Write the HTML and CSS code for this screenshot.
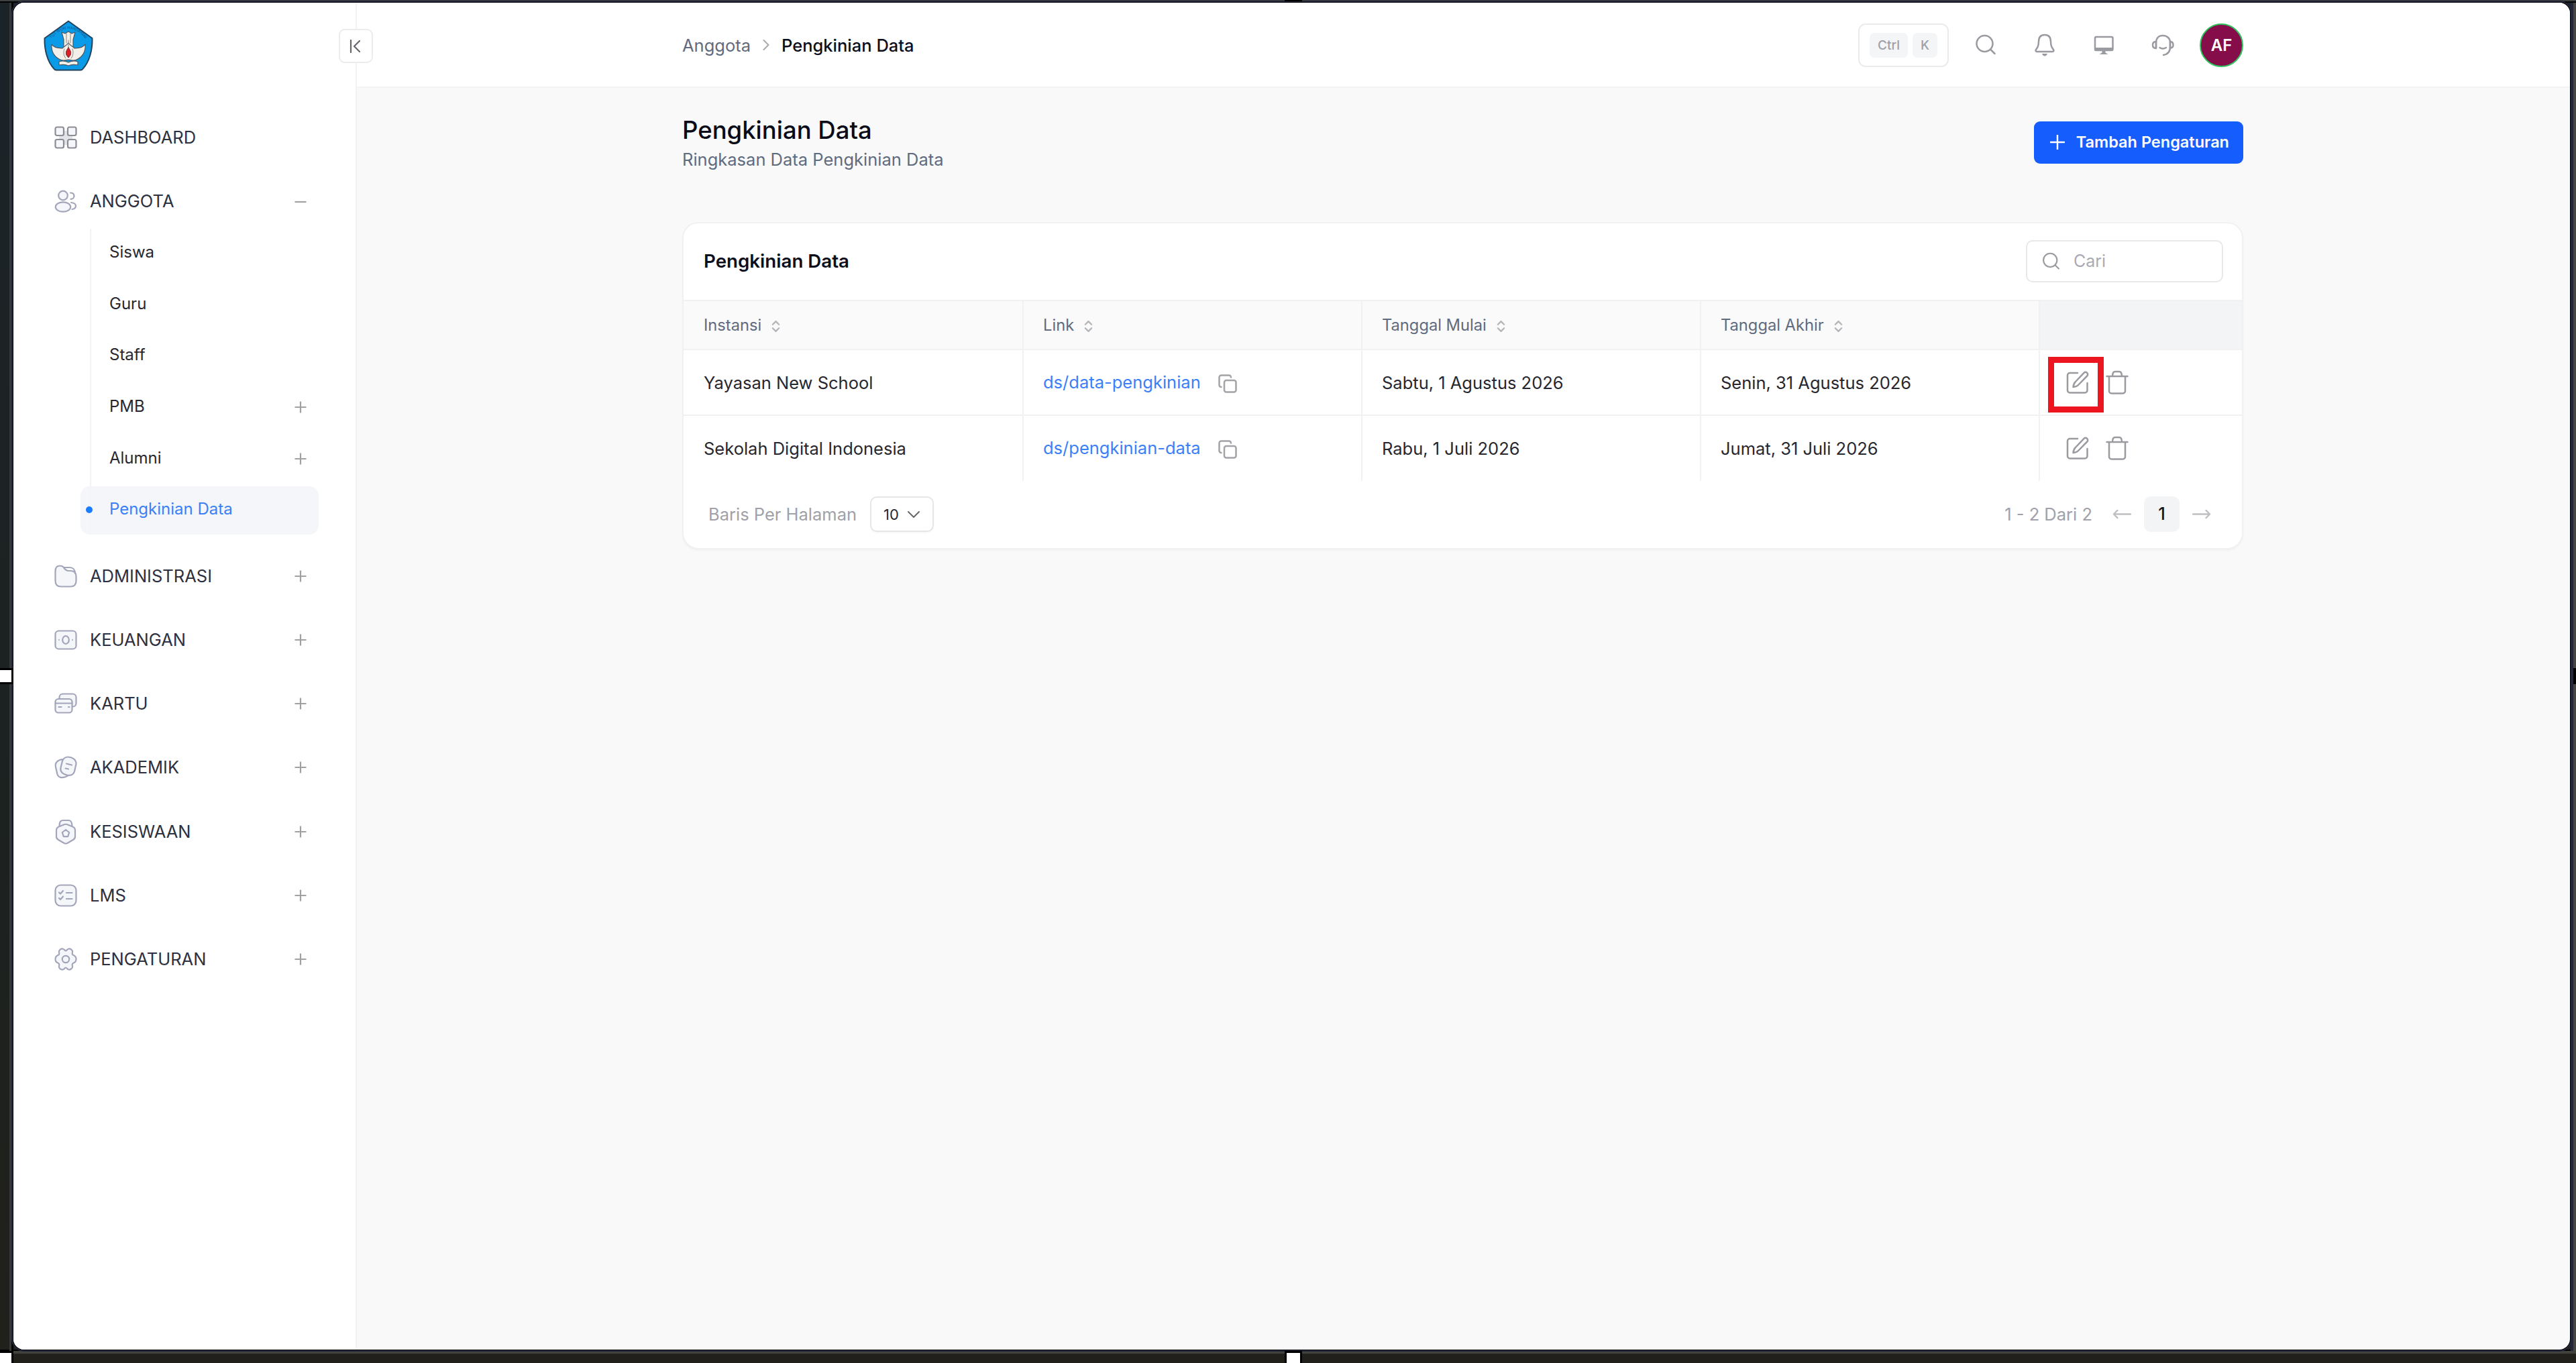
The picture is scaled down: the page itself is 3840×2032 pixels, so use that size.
FILE: index.html
```html
<!DOCTYPE html>
<html lang="id">
<head>
    <meta charset="UTF-8">
    <title>Pengkinian Data</title>
    <link rel="stylesheet" href="styles.css">
</head>
<body>
    <!-- shared icons -->
    <svg class="sprite" width="0" height="0">
        <symbol id="plus" viewBox="0 0 18 18"><path d="M9 .5v17M.5 9h17"/></symbol>
        <symbol id="search" viewBox="0 0 32 32"><circle cx="14.5" cy="14" r="12"/><path d="M23.5 23l6 6"/></symbol>
        <symbol id="sort" viewBox="0 0 14 20"><path d="M2 7l5-5 5 5M2 13l5 5 5-5"/></symbol>
        <symbol id="copy" viewBox="0 0 28 28"><rect x="9" y="9" width="17.5" height="17.5" rx="3"/><path d="M4.500 19A3 3 0 0 1 1.500 16V4.500A3 3 0 0 1 4.500 1.500H16A3 3 0 0 1 19 4.500"/></symbol>
        <symbol id="edit" viewBox="0 0 34 34"><path d="M17 3H5.500A3.500 3.500 0 0 0 2 6.500V29a3.500 3.500 0 0 0 3.500 3.500H28A3.500 3.500 0 0 0 31.500 29V18"/><path d="M26.500 2.800a3.300 3.300 0 0 1 4.700 4.700L18 21c-2 2-5 2.700-7.500 3 .3-2.500 1-5.500 3-7.500z"/></symbol>
        <symbol id="trash" viewBox="0 0 34 36"><path d="M1.500 9h31M5 9v22a3.500 3.500 0 0 0 3.500 3.500h17A3.500 3.500 0 0 0 29 31V9M10 9c0-5 1.500-7 4-7h6c2.500 0 4 2 4 7"/></symbol>
    </svg>

    <div class="window">
        <aside class="sidebar">
            <div class="sidebar-head">
                <svg class="logo" viewBox="0 0 74 76">
                    <path class="shield" d="M37 1.500L72.500 27C73 45 68 62 59 72c-1 1.700-2 2.500-4 2.500H19c-2 0-3-.8-4-2.500C6 62 1 45 1.500 27z"/>
                    <path id="arc" class="arc" d="M9 31Q37-5 65 31"/>
                    <text class="motto"><textPath href="#arc" startOffset="50%">TUT WURI HANDAYANI</textPath></text>
                    <path class="wing" d="M27 18l5 2 5-3 5 3 5-2-3 11v14H30V29z"/>
                    <path class="wing" d="M12 36c4 6 10 5 16 6 3-3 6-4 9-8 3 4 6 5 9 8 6-1 12 0 16-6 1 12-4 18-11 22-5 3-9 2-14 1-5 1-9 2-14-1-7-4-12-10-11-22z"/>
                    <path class="feather" d="M34 20v14M40 20v14M31 43c-2 5-1 10 2 14M43 43c2 5 1 10-2 14M37 30v12"/>
                    <path class="flame" d="M37 41c4 5 4 8 3 11l-3 4-3-4c-1-3-1-6 3-11z"/>
                    <path class="book" d="M23 62c5-2 10-1 14 1 4-2 9-3 14-1v5c-5-1-10-1-14 1-4-2-9-2-14-1z"/>
                </svg>
                <button class="collapse">
                    <svg width="18" height="20" viewBox="0 0 18 20"><path d="M2 1v18M15 2L7 10l8 8"/></svg>
                </button>
            </div>

            <nav class="nav">
                <a class="nav-item">
                    <svg class="nav-icon dark" viewBox="0 0 34 34"><path class="cross" d="M13 7h8v7h6v6h-6v8h-8v-8H7v-6h6z"/><rect x="1.500" y="1.500" width="12.500" height="12.500" rx="2.500"/><rect x="20" y="1.500" width="12.500" height="12.500" rx="2.500"/><rect x="1.500" y="20" width="12.500" height="12.500" rx="2.500"/><rect x="20" y="20" width="12.500" height="12.500" rx="2.500"/></svg>
                    <span>DASHBOARD</span>
                </a>
                <a class="nav-item">
                    <svg class="nav-icon" viewBox="0 0 34 34"><circle cx="13" cy="8.500" r="6.800"/><ellipse cx="13" cy="25.500" rx="11.200" ry="7.200"/><path class="open" d="M24 4.500c3.500 0 5.500 2 5.500 4.700 0 2.500-2 4.600-5 4.600M25 19c4 .5 7 2 7 5s-2.500 4.500-5.500 5"/></svg>
                    <span>ANGGOTA</span>
                    <svg class="toggle" viewBox="0 0 18 18"><path d="M.5 10h17"/></svg>
                </a>
                <div class="subnav">
                    <a class="subnav-item"><span>Siswa</span></a>
                    <a class="subnav-item"><span>Guru</span></a>
                    <a class="subnav-item"><span>Staff</span></a>
                    <a class="subnav-item"><span>PMB</span><svg class="toggle"><use href="#plus"/></svg></a>
                    <a class="subnav-item"><span>Alumni</span><svg class="toggle"><use href="#plus"/></svg></a>
                    <a class="subnav-item active"><i class="dot"></i><span>Pengkinian Data</span></a>
                </div>
                <a class="nav-item">
                    <svg class="nav-icon" viewBox="0 0 34 34"><path d="M1.500 9.500C1.500 4 4 1.500 8 1.500c4 0 5 1 7 4 1.500 2 2.500 3.500 6 3.500h3c6 0 8.500 2.500 8.500 8V24c0 6-3 8.500-8.500 8.500H10c-6 0-8.500-3-8.500-8.500z"/><path class="open" d="M14.500 4H23c5.500 0 7.500 2.500 8 9"/></svg>
                    <span>ADMINISTRASI</span><svg class="toggle"><use href="#plus"/></svg>
                </a>
                <a class="nav-item">
                    <svg class="nav-icon" viewBox="0 0 34 34"><rect x="1.500" y="3.500" width="31" height="27" rx="5"/><ellipse cx="17" cy="17" rx="4.800" ry="5.800"/><path class="thin" d="M7 16.500v1M27 16.500v1"/></svg>
                    <span>KEUANGAN</span><svg class="toggle"><use href="#plus"/></svg>
                </a>
                <a class="nav-item">
                    <svg class="nav-icon" viewBox="0 0 34 34"><path d="M7.500 10V7.500a5 5 0 0 1 5-5h15a5 5 0 0 1 5 5v9a5 5 0 0 1-5 5H26"/><rect x="1.500" y="10" width="25" height="20.500" rx="4.500"/><path d="M1.500 16.500h25M6.500 22h4M21 22h1.500"/></svg>
                    <span>KARTU</span><svg class="toggle"><use href="#plus"/></svg>
                </a>
                <a class="nav-item">
                    <svg class="nav-icon" viewBox="0 0 34 34"><path d="M12 5C5 6 .5 10 2 16.500l2.500 11C6 32 11 33.500 17 31c3-1.500 5-2 5.500-3z"/><path d="M20.500 1.500c6 0 12.500 4 12 10.500l-2.500 11c-1.500 5-6 6.500-11 5.500-6.500-1.500-10.500-5-9.500-11l2.500-10c1.500-4 4-6 8.500-6z"/><path d="M18 11.500l8 2M16.500 18.500l4.500 1"/></svg>
                    <span>AKADEMIK</span><svg class="toggle"><use href="#plus"/></svg>
                </a>
                <a class="nav-item">
                    <svg class="nav-icon" viewBox="0 0 34 34"><path d="M7.500 9.500C7.500 2.500 9 0 12.500 0h9c3.500 0 5 2.500 5 9.500"/><path d="M14 6.500c2-1 4-1 6 0l7.500 3c2.500 1.200 3.500 3 3.500 5.500v9c0 2.500-1 4-3 5l-8.500 5c-2 1-3 1-5 0L6 29c-2-1-3-2.500-3-5v-9c0-2.500 1-4.300 3.500-5.500z"/><path d="M17 14l5.200 4-2 6.200h-6.400l-2-6.200z"/></svg>
                    <span>KESISWAAN</span><svg class="toggle"><use href="#plus"/></svg>
                </a>
                <a class="nav-item">
                    <svg class="nav-icon" viewBox="0 0 34 34"><rect x="1.500" y="1.500" width="31" height="31" rx="8"/><path class="open" d="M7 12.500l2 2 4-4.500M7 21l2 2 4-4.500M18 13h8.500M18 22h8.500"/></svg>
                    <span>LMS</span><svg class="toggle"><use href="#plus"/></svg>
                </a>
                <a class="nav-item">
                    <svg class="nav-icon" viewBox="0 0 34 34"><path d="M17 4.500C18.500 4.500 19 2 21.500 1.500s5 1.500 5.500 3.500-1 3.500 0 5 5.500 1 5.500 7-4.500 5-5.500 7 .5 3.500 0 5-3 4-5.500 3.500-3-3-4.500-3-2 2.500-4.500 3S7.500 31 7 29s1-3 0-5-5.500-1-5.500-7S6 11.500 7 10s-.5-3 0-5 3-4 5.500-3.500 3 3 4.500 3z"/><circle cx="17" cy="17" r="5.200"/></svg>
                    <span>PENGATURAN</span><svg class="toggle"><use href="#plus"/></svg>
                </a>
            </nav>
        </aside>

        <main class="main">
            <header class="topbar">
                <div class="container topbar-inner">
                    <div class="breadcrumb">
                        <span>Anggota</span>
                        <svg width="10" height="18" viewBox="0 0 10 18"><path d="M1.500 2l7 7-7 7"/></svg>
                        <strong>Pengkinian Data</strong>
                    </div>
                    <div class="shortcut"><kbd>Ctrl</kbd><kbd>K</kbd></div>
                    <div class="tool"><svg width="32" height="32"><use href="#search"/></svg></div>
                    <div class="tool"><svg width="32" height="34" viewBox="0 0 32 34"><path d="M16 2c6 0 9 4 9 10 0 8 2 9 4 12 1 2 0 3-2 3H5c-2 0-3-1-2-3 2-3 4-4 4-12 0-6 3-10 9-10z"/><path class="solid" d="M12 30h8c-1 2.500-2 3.500-4 3.500s-3-1-4-3.500z"/></svg></div>
                    <div class="tool"><svg width="32" height="34" viewBox="0 0 32 34"><rect x="3" y="5" width="26.500" height="20" rx="2"/><path class="solid" d="M2 21h28v3.500q0 1.500-2 1.500H18.500v2.500l4 2.500H9.500l4-2.500V26H4q-2 0-2-1.500z"/></svg></div>
                    <div class="tool"><svg width="34" height="34" viewBox="0 0 34 34"><path d="M7 21V14C7 7 11 3 17 3s11 4 11 10v7c0 7-4 11-10 12"/><path d="M7 12c-4 0-5 2-5 5s1 5 5 5zM28 12c3 0 4.500 2 4.500 5s-1 4.500-4.500 4.500zM12.500 21c3 2 6 2 9.500 0"/></svg></div>
                    <div class="avatar">AF</div>
                </div>
            </header>

            <div class="container content">
                <div class="page-head">
                    <div>
                        <h1>Pengkinian Data</h1>
                        <p>Ringkasan Data Pengkinian Data</p>
                    </div>
                    <button class="btn-primary"><svg width="22" height="22"><use href="#plus"/></svg><span>Tambah Pengaturan</span></button>
                </div>

                <section class="card">
                    <div class="card-head">
                        <h2>Pengkinian Data</h2>
                        <div class="search-box"><svg width="27" height="27"><use href="#search"/></svg><span>Cari</span></div>
                    </div>

                    <table class="table">
                        <thead>
                            <tr>
                                <th><span>Instansi</span><svg class="sort"><use href="#sort"/></svg></th>
                                <th><span>Link</span><svg class="sort"><use href="#sort"/></svg></th>
                                <th><span>Tanggal Mulai</span><svg class="sort"><use href="#sort"/></svg></th>
                                <th><span>Tanggal Akhir</span><svg class="sort"><use href="#sort"/></svg></th>
                                <th class="col-action"></th>
                            </tr>
                        </thead>
                        <tbody>
                            <tr>
                                <td>Yayasan New School</td>
                                <td><a class="link">ds/data-pengkinian</a><svg class="copy"><use href="#copy"/></svg></td>
                                <td>Sabtu, 1 Agustus 2026</td>
                                <td>Senin, 31 Agustus 2026</td>
                                <td class="col-action">
                                    <div class="actions">
                                        <span class="marked"><svg class="act"><use href="#edit"/></svg></span>
                                        <svg class="act trash"><use href="#trash"/></svg>
                                    </div>
                                </td>
                            </tr>
                            <tr>
                                <td>Sekolah Digital Indonesia</td>
                                <td><a class="link">ds/pengkinian-data</a><svg class="copy"><use href="#copy"/></svg></td>
                                <td>Rabu, 1 Juli 2026</td>
                                <td>Jumat, 31 Juli 2026</td>
                                <td class="col-action">
                                    <div class="actions">
                                        <span><svg class="act"><use href="#edit"/></svg></span>
                                        <svg class="act trash"><use href="#trash"/></svg>
                                    </div>
                                </td>
                            </tr>
                        </tbody>
                    </table>

                    <div class="card-foot">
                        <span>Baris Per Halaman</span>
                        <div class="select">10<svg width="20" height="12" viewBox="0 0 20 12"><path d="M2 2l8 8 8-8"/></svg></div>
                        <span class="range">1 - 2 Dari 2</span>
                        <svg class="arrow" viewBox="0 0 30 16"><path d="M29 8H2M8 2L2 8l6 6"/></svg>
                        <span class="page">1</span>
                        <svg class="arrow" viewBox="0 0 30 16"><path d="M1 8h27M22 2l6 6-6 6"/></svg>
                    </div>
                </section>
            </div>
        </main>
    </div>

    <!-- resize handles around the window -->
    <i class="handle handle-left"></i>
    <i class="handle handle-corner"></i>
    <i class="handle handle-bottom"></i>
    <i class="handle handle-top"></i>
    <i class="handle handle-right"></i>
</body>
</html>
```
FILE: styles.css
```css
:root {
    --primary: #155dfc;
    --link: #3b80f7;
    --text: #27272f;
    --muted: #5f6b7f;
    --light: #a0a1a8;
    --icon: #9a9aa1;
    --line: #f1f1f2;
    --bg: #f9f9f9;
}

*,
*::after {
    box-sizing: border-box;
}

body {
    position: relative;
    margin: 0;
    width: 3840px;
    height: 2032px;
    padding: 4px 9px 20px 20px;
    overflow: hidden;
    font-family: Inter, "Liberation Sans", sans-serif;
    font-size: 25.500px;
    color: var(--text);
    white-space: nowrap;
    background:
        linear-gradient(#3e4142, #3e4142) 0 0 / 100% 2px no-repeat,
        linear-gradient(#000, #000) 0 2px / 100% 2px no-repeat,
        linear-gradient(#454543, #454543) 100% 0 / 4px 2014px no-repeat,
        linear-gradient(#24263a, #24263a) 3832px 0 / 4px 2014px no-repeat,
        linear-gradient(#000, #000) 17px 0 / 3px 2014px no-repeat,
        linear-gradient(#36393a, #36393a) 14px 0 / 3px 2014px no-repeat,
        linear-gradient(#000, #000) 0 2012px / 100% 2px no-repeat,
        linear-gradient(#41423e, #41423e) 0 2014px / 100% 4px no-repeat,
        linear-gradient(#1a2328, #1b2221 50%, #21201b);
}

svg {
    display: block;
    flex: none;
    fill: none;
    stroke: var(--icon);
    stroke-width: 2.5;
    stroke-linecap: round;
    stroke-linejoin: round;
}

.sprite {
    position: absolute;
}

.window {
    display: flex;
    height: 2008px;
    border-radius: 16px;
    overflow: hidden;
    background: var(--bg);
    box-shadow: 0 0 0 1px #000, 0 0 0 3px #24263a;
}

/* sidebar */
.sidebar {
    flex: none;
    width: 512px;
    background: #fff;
    border-right: 2px solid #f3f3f4;
}

.sidebar-head {
    display: flex;
    justify-content: space-between;
    align-items: flex-start;
    height: 165px;
    padding: 26px 0 0 45px;
}

.logo {
    width: 74px;
    height: 76px;
}

.logo .shield {
    fill: #0a9be8;
    stroke: #24435c;
    stroke-width: 2;
}

.logo .arc {
    stroke: none;
}

.logo .motto {
    font-size: 5.5px;
    fill: #14507c;
    stroke: none;
    text-anchor: middle;
}

.logo .wing,
.logo .book {
    fill: #f3efe9;
    stroke: #4b5560;
    stroke-width: 1.2;
}

.logo .feather {
    stroke: #8d8781;
    stroke-width: 1;
}

.logo .flame {
    fill: #dc1f26;
    stroke: #6b2a2a;
    stroke-width: 1;
}

.collapse {
    position: relative;
    z-index: 1;
    display: flex;
    align-items: center;
    justify-content: center;
    width: 51px;
    height: 51px;
    margin: 13px -26px 0 0;
    padding: 0 2px 0 0;
    background: #fff;
    border: 2px solid #ececee;
    border-radius: 9px;
}

.collapse svg {
    stroke: #66666d;
    stroke-width: 2.2;
}

.nav-item {
    display: flex;
    align-items: center;
    height: 72px;
    margin-bottom: 23.2px;
    padding: 0 73px 0 61px;
    color: #2c3040;
}

.nav-item span {
    padding-bottom: 1px;
}

.nav-icon {
    width: 34px;
    height: 34px;
    margin-right: 19px;
    overflow: visible;
    fill: #f5f6fa;
    stroke: #a3a5ba;
    stroke-width: 2.2;
}

.nav-icon.dark {
    stroke: #8c8c95;
}

.nav-icon .cross {
    fill: #e3e4e9;
    stroke: none;
}

.nav-icon .open {
    fill: none;
}

.nav-icon .thin {
    stroke-width: 1.5;
}

.toggle {
    width: 18px;
    height: 18px;
    margin-left: auto;
    stroke: #a1a1a3;
    stroke-width: 2.2;
    stroke-linecap: butt;
}

.subnav {
    margin: -18px 0 26px 114px;
    border-left: 2px solid #f3f3f4;
}

.subnav-item {
    display: flex;
    align-items: center;
    width: 355px;
    height: 72px;
    margin: 4.700px 0 0 -16px;
    padding: 0 18px 0 43px;
    font-size: 24px;
}

.subnav-item span {
    padding-bottom: 4px;
}

.subnav-item.active {
    position: relative;
    background: rgba(243, 245, 248, .9);
    border-radius: 14px;
    color: var(--link);
}

.dot {
    position: absolute;
    left: 8px;
    top: 30px;
    width: 10px;
    height: 10px;
    border-radius: 50%;
    background: #1a7cff;
}

/* main column */
.main {
    flex: 1;
}

.container {
    width: 2327px;
    margin-left: 485px;
}

.topbar {
    height: 127px;
    background: #fff;
    border-bottom: 2px solid #f3f3f4;
}

.topbar-inner {
    display: flex;
    align-items: center;
    height: 126px;
}

.breadcrumb {
    display: flex;
    align-items: center;
    gap: 18px;
    margin-right: auto;
    color: var(--muted);
}

.breadcrumb svg {
    stroke: #a9a9ae;
    stroke-width: 2;
}

.breadcrumb strong {
    font-weight: 500;
    color: #0c0f1c;
}

.shortcut {
    display: flex;
    gap: 7px;
    height: 65px;
    margin-right: 11px;
    padding: 12px 15px;
    border: 2px solid #ebebed;
    border-radius: 11px;
}

.shortcut kbd {
    display: flex;
    align-items: center;
    height: 37px;
    padding: 0 12px;
    border-radius: 7px;
    background: #f4f5f6;
    font: 500 19px Inter, sans-serif;
    color: #9fa0a7;
}

.tool {
    display: flex;
    justify-content: center;
    width: 88px;
}

.tool .solid {
    fill: var(--icon);
    stroke: none;
}

.avatar {
    display: flex;
    align-items: center;
    justify-content: center;
    width: 65px;
    height: 65px;
    margin-left: 11px;
    border: 2px solid #2fc45f;
    border-radius: 50%;
    background: #850d4a;
    color: #fff;
    font-size: 24px;
    font-weight: 600;
}

.content {
    padding-top: 41px;
}

.page-head {
    display: flex;
    align-items: center;
    justify-content: space-between;
    margin-bottom: 76px;
}

h1,
h2,
p {
    margin: 0;
    font-weight: 500;
}

h1 {
    font-size: 36.500px;
    font-weight: 450;
    line-height: 44px;
    color: #090c18;
}

.page-head p {
    margin-top: 5px;
    font-weight: 400;
    line-height: 34px;
    color: var(--muted);
}

.btn-primary {
    display: flex;
    align-items: center;
    gap: 17px;
    height: 63px;
    margin-bottom: 3px;
    padding: 0 21px 0 24px;
    border: none;
    border-radius: 9px;
    background: var(--primary);
    color: #fff;
    font: 600 23.500px Inter, sans-serif;
}

.btn-primary span {
    padding-bottom: 2px;
}

.btn-primary svg {
    stroke: #fff;
    stroke-width: 2;
}

/* table card */
.card {
    border: 2px solid var(--line);
    border-radius: 24px;
    background: #fff;
    box-shadow: 0 2px 3px rgba(0, 0, 0, .03);
    overflow: hidden;
}

.card-head {
    display: flex;
    align-items: center;
    justify-content: space-between;
    height: 114px;
    padding: 0 28px 2px 30px;
}

h2 {
    font-size: 27.700px;
    font-weight: 600;
    color: #0c0f1c;
}

.search-box {
    display: flex;
    align-items: center;
    gap: 20px;
    width: 294px;
    height: 63px;
    padding-left: 22px;
    border: 2px solid #e8e8ea;
    border-radius: 10px;
    color: #a9abb4;
}

.search-box span {
    font-size: 25px;
}

.table {
    width: 100%;
    table-layout: fixed;
    border-collapse: separate;
    border-spacing: 0;
}

.table th,
.table td {
    height: 98px;
    padding: 0 29px;
    border-left: 2px solid var(--line);
    border-bottom: 2px solid var(--line);
    text-align: left;
    font-weight: 400;
}

.table th {
    height: 75px;
    border-top: 2px solid var(--line);
    background: #fafafa;
    color: var(--muted);
    font-size: 23.700px;
}

.table th:first-child,
.table td:first-child {
    padding-left: 30px;
    border-left: none;
}

.table tbody tr:last-child td {
    border-bottom-color: transparent;
}

.table .col-action {
    width: 303px;
}

.table th.col-action {
    background: #f3f4f6;
}

.sort,
.copy {
    display: inline-block;
    vertical-align: middle;
}

.sort {
    width: 13px;
    height: 19px;
    margin-left: 15px;
    stroke: #b4b4b9;
}

.copy {
    width: 28px;
    height: 28px;
    margin-left: 26px;
    stroke: #a3a3a8;
}

.link {
    color: var(--link);
}

.actions {
    display: flex;
    align-items: center;
    gap: 25px;
    padding-left: 10px;
}

.act {
    width: 34px;
    height: 34px;
}

.act.trash {
    height: 36px;
}

.marked {
    position: relative;
}

/* red frame drawn over the edit button */
.marked::after {
    content: "";
    position: absolute;
    left: -27px;
    top: -21px;
    width: 83px;
    height: 83px;
    border: 9px solid #ed1620;
}

.card-foot {
    display: flex;
    align-items: center;
    height: 99px;
    padding: 0 46px 2px 37px;
    color: var(--light);
}

.select {
    display: flex;
    align-items: center;
    justify-content: space-between;
    width: 95px;
    height: 53px;
    margin-left: 20px;
    padding: 0 18px;
    border: 2px solid #e6e6e8;
    border-radius: 10px;
    box-shadow: 0 2px 2px rgba(0, 0, 0, .03);
    font-size: 22px;
    color: var(--text);
}

.select svg {
    stroke: #66666d;
    stroke-width: 2;
}

.range {
    margin-left: auto;
}

.arrow {
    width: 28px;
    height: 15px;
    margin: 0 19px 0 30px;
    stroke: #c0c0c4;
}

.page {
    width: 53px;
    height: 53px;
    border-radius: 10px;
    background: #f3f4f6;
    color: #12162a;
    font-weight: 500;
    line-height: 51px;
    text-align: center;
}

.page + .arrow {
    margin: 0 0 0 19px;
}

/* handles */
.handle {
    position: absolute;
    background: #fff;
    border: 3px solid #000;
}

.handle-left {
    left: -3px;
    top: 996px;
    width: 23px;
    height: 24px;
}

.handle-corner {
    left: -3px;
    top: 2014px;
    width: 23px;
    height: 24px;
}

.handle-bottom {
    left: 1915px;
    top: 2014px;
    width: 26px;
    height: 24px;
}

.handle-top {
    left: 1915px;
    top: -22px;
    width: 26px;
    height: 24px;
}

.handle-right {
    left: 3836px;
    top: 996px;
    width: 24px;
    height: 24px;
    background: #000;
}
```
